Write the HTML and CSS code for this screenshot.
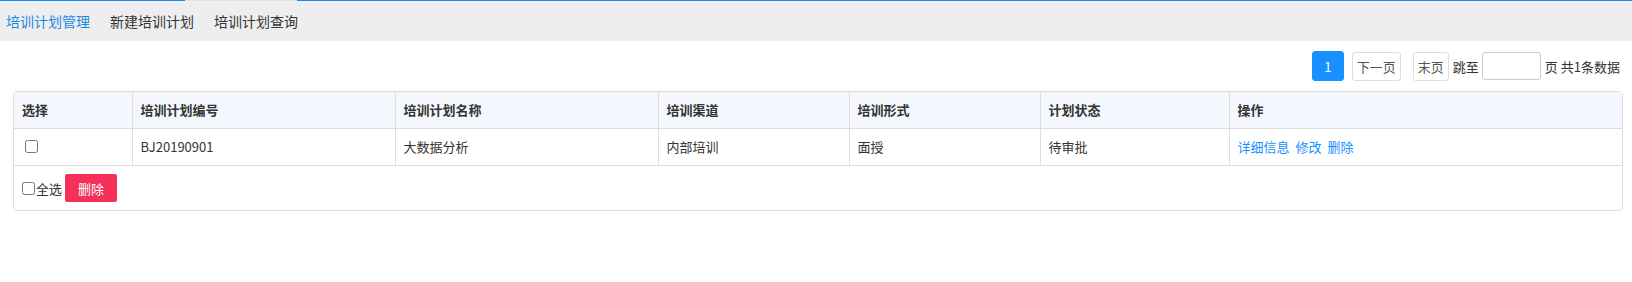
FILE: index.html
```html
<!DOCTYPE html>
<html lang="zh-CN">
<head>
  <meta charset="UTF-8" />
  <title>培训计划管理</title>
  <link rel="stylesheet" href="styles.css">
</head>
<body>
  <div class="topline"></div>
  <div class="nav">
    <a class="active" href="#">培训计划管理</a>
    <a href="#">新建培训计划</a>
    <a href="#">培训计划查询</a>
  </div>
  <div class="content">
    <div class="pager">
      <button class="page current">1</button>
      <button class="page next">下一页</button>
      <button class="page last">末页</button>
      <span class="jump">跳至</span>
      <input type="text" class="page-input" />
      <span class="total">页 共1条数据</span>
    </div>
    <div class="panel">
      <table class="grid">
        <colgroup>
          <col style="width:118px">
          <col style="width:263px">
          <col style="width:263px">
          <col style="width:191px">
          <col style="width:191px">
          <col style="width:189px">
          <col style="width:393px">
        </colgroup>
        <thead>
          <tr>
            <th>选择</th>
            <th>培训计划编号</th>
            <th>培训计划名称</th>
            <th>培训渠道</th>
            <th>培训形式</th>
            <th>计划状态</th>
            <th>操作</th>
          </tr>
        </thead>
        <tbody>
          <tr>
            <td><input type="checkbox" class="row-check" /></td>
            <td>BJ20190901</td>
            <td>大数据分析</td>
            <td>内部培训</td>
            <td>面授</td>
            <td>待审批</td>
            <td class="ops">
              <a href="#">详细信息</a>
              <a href="#">修改</a>
              <a href="#">删除</a>
            </td>
          </tr>
        </tbody>
      </table>
      <div class="panel-foot">
        <label class="check-all"><input type="checkbox" />全选</label>
        <button class="btn-danger">删除</button>
      </div>
    </div>
  </div>
</body>
</html>
```

FILE: styles.css
```css
body {
  margin: 0;
  font-family: "Noto Sans CJK SC", "Liberation Sans", sans-serif;
  font-size: 13px;
  color: #333;
  background: #fff;
}
.topline {
  height: 1px;
  background: linear-gradient(to right, #1e88e5 185px, #d6e5f2 185px, #d6e5f2 297px, #1e88e5 297px);
}
.nav {
  height: 40px;
  background: #eee;
  display: flex;
  align-items: center;
  gap: 20px;
  padding-left: 6px;
}
.nav a {
  font-size: 14px;
  line-height: 20px;
  color: #333;
  text-decoration: none;
}
.nav a.active {
  color: #1e88e5;
}
.content {
  padding: 10px 9px 0 13px;
}
.pager {
  display: flex;
  justify-content: flex-end;
  align-items: center;
  height: 30px;
  padding-right: 3px;
  margin-bottom: 10px;
}
.page {
  height: 29px;
  padding: 0;
  font-family: inherit;
  font-size: 13px;
  color: #555;
  background: #fff;
  border: 1px solid #ddd;
  border-radius: 3px;
  cursor: pointer;
}
.page.current {
  width: 32px;
  height: 30px;
  background: #1890ff;
  border-color: #1890ff;
  color: #fff;
  margin-right: 8px;
}
.page.next {
  width: 49px;
  margin-right: 12px;
}
.page.last {
  width: 36px;
  margin-right: 4px;
}
.jump {
  margin-right: 3px;
}
.page-input {
  width: 59px;
  height: 28px;
  box-sizing: border-box;
  border: 1px solid #ccc;
  border-radius: 3px;
  margin-right: 4px;
  padding: 0 4px;
}
.panel {
  border: 1px solid #ddd;
  border-radius: 4px;
  overflow: hidden;
}
.grid {
  width: 100%;
  table-layout: fixed;
  border-collapse: collapse;
}
.grid th,
.grid td {
  height: 36px;
  padding: 0 8px;
  text-align: left;
  border-right: 1px solid #ddd;
  border-bottom: 1px solid #ddd;
  line-height: 20px;
}
.grid th:last-child,
.grid td:last-child {
  border-right: none;
}
.grid th {
  background: #f4f8fe;
  font-weight: bold;
  color: #333;
}
.row-check {
  margin: 4px 0 0 3px;
  width: 13px;
  height: 13px;
}
.ops a {
  color: #1890ff;
  text-decoration: none;
  margin-right: 3px;
}
.panel-foot {
  height: 28px;
  padding: 8px;
  display: flex;
  align-items: center;
}
.check-all {
  display: flex;
  align-items: center;
}
.check-all input {
  margin: 0 1px 0 0;
  width: 13px;
  height: 13px;
}
.btn-danger {
  width: 52px;
  height: 28px;
  margin-left: 3px;
  padding: 0;
  font-family: inherit;
  font-size: 13px;
  color: #fff;
  background: #f5305a;
  border: none;
  border-radius: 2px;
  cursor: pointer;
}
```
